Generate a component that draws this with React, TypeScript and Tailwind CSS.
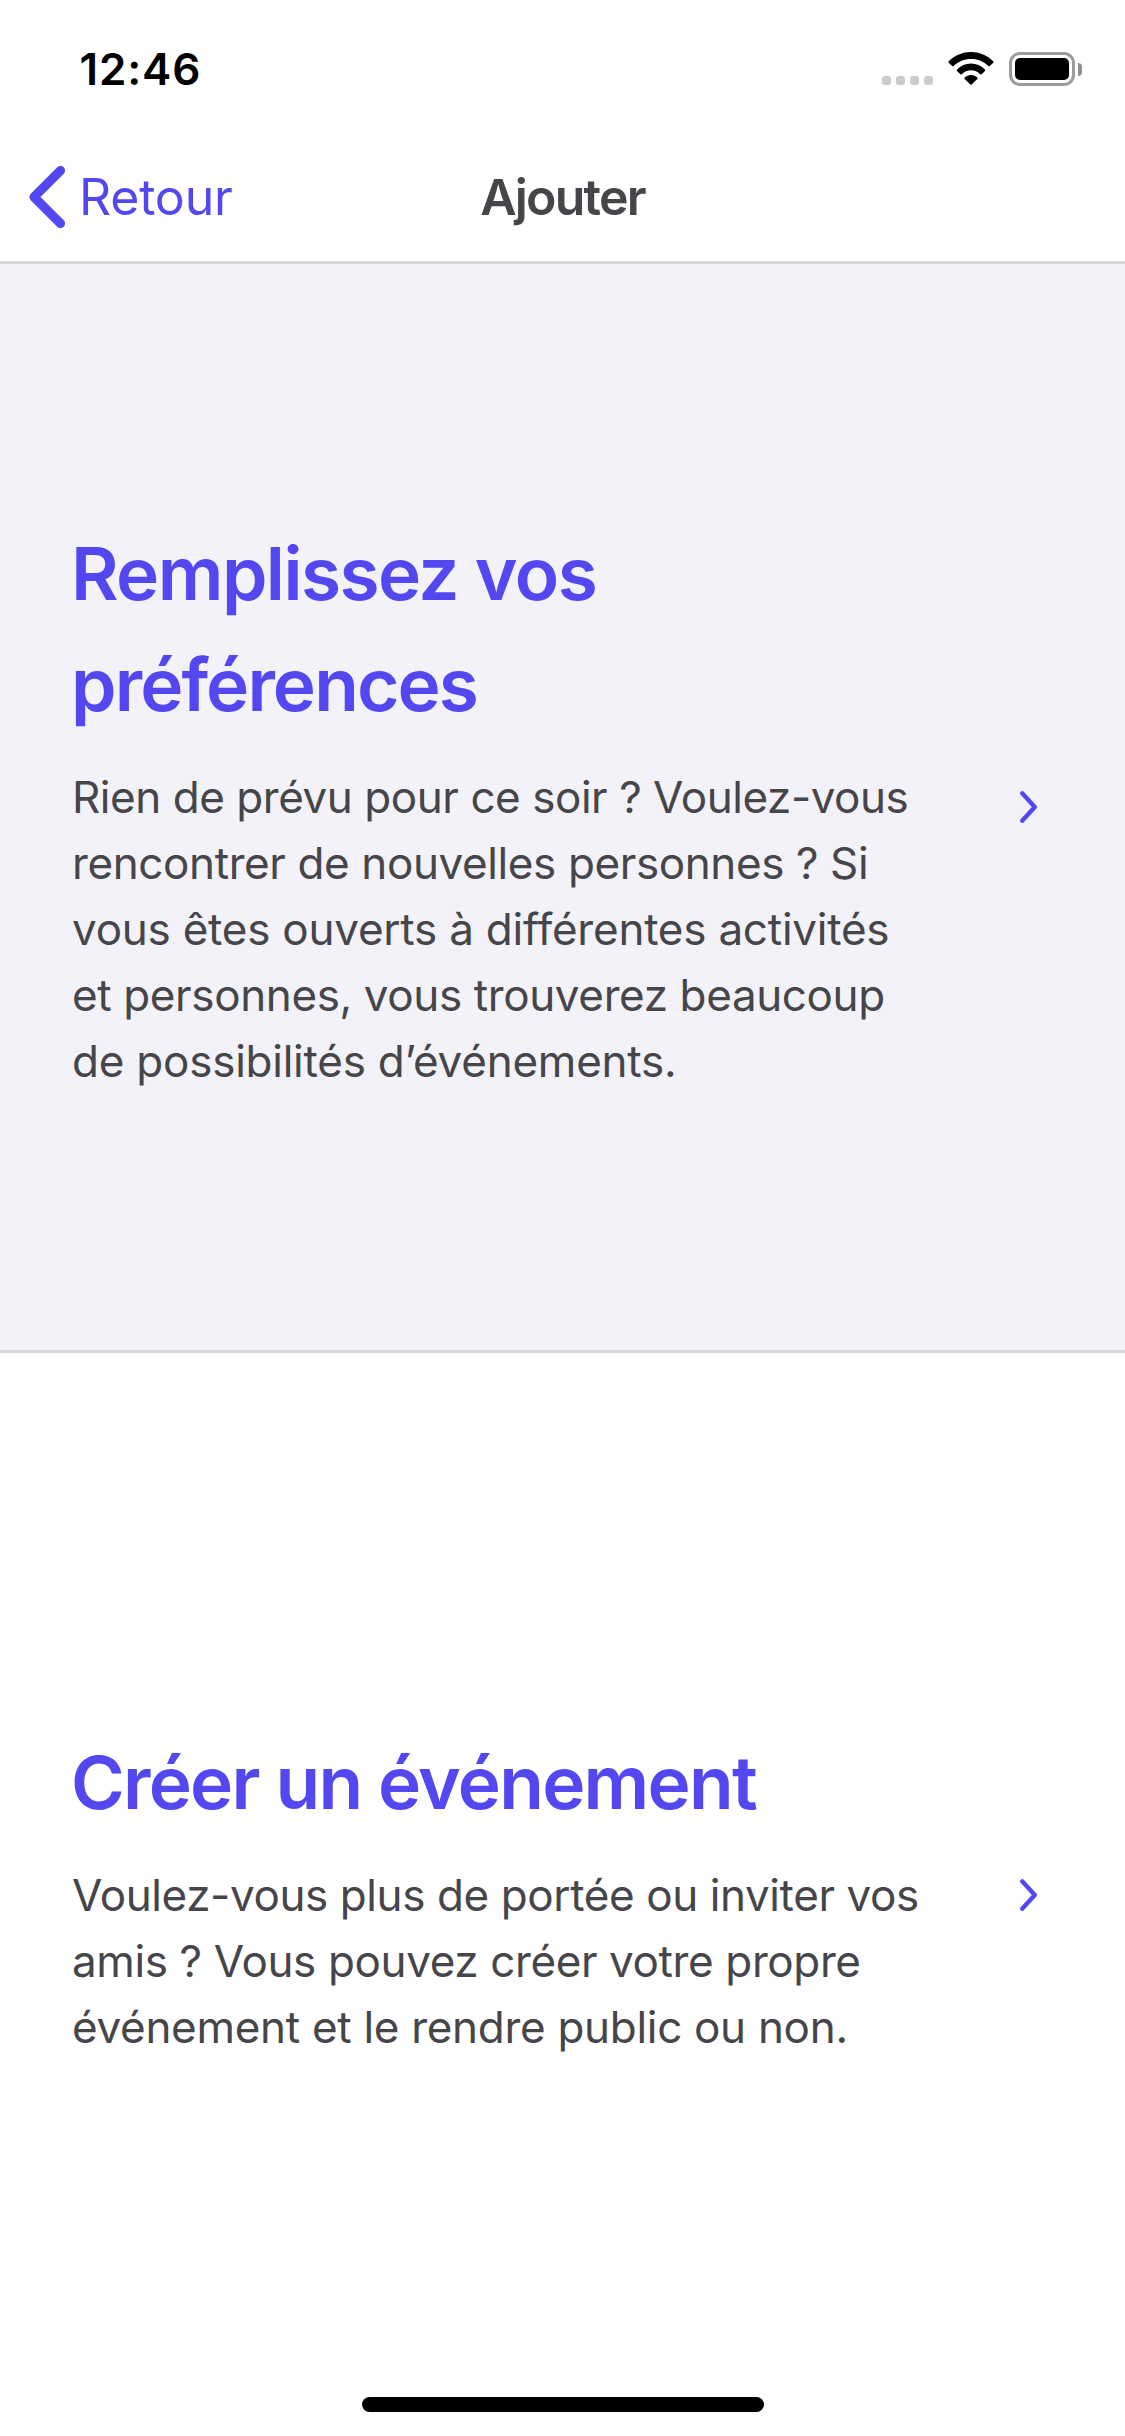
type Line = { text: string; tracking: string };

type OptionProps = {
  title: Line[];
  body: Line[];
  className: string;
};

function Chevron() {
  return (
    <svg className="mt-0.5 mr-[86px] h-9 w-5 shrink-0" viewBox="0 0 20 36" fill="none" aria-hidden="true">
      <path d="M3.200 4.300 15.800 18 3.200 31.700" stroke="#5348f0" strokeWidth="4.4" strokeLinecap="round" strokeLinejoin="round" />
    </svg>
  );
}

function Option({ title, body, className }: OptionProps) {
  return (
    <button type="button" className={`flex w-full items-center justify-between text-left ${className}`}>
      <span className="flex flex-col gap-6 pl-[71px]">
        <span className="flex flex-col text-[73px] leading-[111px] font-semibold text-[#5348f0]">
          {title.map((line) => (
            <span key={line.text} className={`whitespace-nowrap ${line.tracking}`}>{line.text}</span>
          ))}
        </span>
        <span className="flex flex-col pl-px text-[44px] leading-[66px] text-[#464549]">
          {body.map((line) => (
            <span key={line.text} className={`whitespace-nowrap ${line.tracking}`}>{line.text}</span>
          ))}
        </span>
      </span>
      <Chevron />
    </button>
  );
}

function StatusBar() {
  return (
    <div className="flex h-[132px] items-start justify-between pl-[79.5px] pr-[43px]">
      <div className="mt-[36px] text-[44px] leading-[66px] font-semibold tracking-[0.85px] text-black">12:46</div>
      <div className="mt-[52px] flex h-[34px] items-start">
        <div className="mt-6 flex gap-[5px]">
          <span className="size-[9px] rounded-[3px] bg-[#cbcbcb]" />
          <span className="size-[9px] rounded-[3px] bg-[#cbcbcb]" />
          <span className="size-[9px] rounded-[3px] bg-[#cbcbcb]" />
          <span className="size-[9px] rounded-[3px] bg-[#cbcbcb]" />
        </div>
        <svg className="ml-[15px] h-[33px] w-[46px]" viewBox="0 0 46 33" aria-hidden="true">
          <path d="M.8 9.200C6.600 3.400 14.400 0 23 0s16.400 3.400 22.200 9.200c.5.500.5 1 .1 1.500L41.800 14c-.4.400-1 .4-1.400 0C35.900 9.500 29.800 6.900 23 6.900S10.100 9.500 5.600 14c-.4.400-1 .4-1.400 0L.7 10.700c-.4-.5-.4-1 .1-1.500Z" />
          <path d="M9 17.500c3.700-3.700 8.600-6 14-6s10.300 2.300 14 6c.4.400.4 1 0 1.400l-3.400 3.400c-.4.400-1 .4-1.400 0C29.800 19.800 26.600 18.300 23 18.300s-6.800 1.500-9.200 4c-.4.400-1 .4-1.400 0L9 18.900c-.4-.4-.4-1 0-1.400Z" />
          <path d="M16.700 25.600c1.700-1.600 3.900-2.500 6.300-2.500s4.600.9 6.300 2.500c.4.400.4.900 0 1.300l-5.700 5.600c-.4.400-.8.400-1.200 0l-5.700-5.600c-.4-.4-.4-.9 0-1.300Z" />
        </svg>
        <div className="ml-[15px] flex items-center">
          <div className="h-[34px] w-[66px] rounded-[11px] border-3 border-[#9b9b9b] p-[3px]">
            <div className="h-[22px] w-[54px] rounded-[5px] bg-black" />
          </div>
          <div className="ml-[3px] h-[13px] w-1 rounded-r-full bg-[#8e8e8e]" />
        </div>
      </div>
    </div>
  );
}

function NavBar() {
  return (
    <div className="grid h-[132px] grid-cols-3 items-center border-b-3 border-[#d8d7dc]">
      <button type="button" className="flex items-center pl-7 text-[50px] leading-[66px] text-[#5348f0]">
        <svg className="h-16 w-[39px]" viewBox="0 0 39 64" fill="none" aria-hidden="true">
          <path d="M32.500 5.500 6 32l26.500 26.500" stroke="currentColor" strokeWidth="9.2" strokeLinecap="round" strokeLinejoin="round" />
        </svg>
        <span className="ml-3 tracking-[-0.2px]">Retour</span>
      </button>
      <h1 className="text-center text-[50px] leading-[66px] font-semibold tracking-[-1.8px] text-[#464549]">Ajouter</h1>
    </div>
  );
}

export default function App() {
  return (
    <div className="flex h-[2436px] w-[1125px] flex-col bg-white font-['Inter','Liberation_Sans',sans-serif]">
      <StatusBar />
      <NavBar />
      <Option
        className="h-[1089px] border-b-3 border-[#d8d7dc] bg-[#f3f2f8] pb-0.5"
        title={[
          { text: "Remplissez vos", tracking: "tracking-[-1.57px]" },
          { text: "préférences", tracking: "tracking-[-1.9px]" },
        ]}
        body={[
          { text: "Rien de prévu pour ce soir ? Voulez-vous", tracking: "tracking-[-0.45px]" },
          { text: "rencontrer de nouvelles personnes ? Si", tracking: "tracking-[-0.39px]" },
          { text: "vous êtes ouverts à différentes activités", tracking: "tracking-[-0.24px]" },
          { text: "et personnes, vous trouverez beaucoup", tracking: "tracking-[-0.38px]" },
          { text: "de possibilités d’événements.", tracking: "tracking-[-0.23px]" },
        ]}
      />
      <div className="relative flex-1">
        <Option
          className="h-full pb-0.5"
          title={[{ text: "Créer un événement", tracking: "tracking-[-1.74px]" }]}
          body={[
            { text: "Voulez-vous plus de portée ou inviter vos", tracking: "tracking-[-0.4px]" },
            { text: "amis ? Vous pouvez créer votre propre", tracking: "tracking-[-0.38px]" },
            { text: "événement et le rendre public ou non.", tracking: "tracking-[-0.3px]" },
          ]}
        />
        <div className="absolute bottom-6 left-[362px] h-[15px] w-[402px] rounded-full bg-black" />
      </div>
    </div>
  );
}
